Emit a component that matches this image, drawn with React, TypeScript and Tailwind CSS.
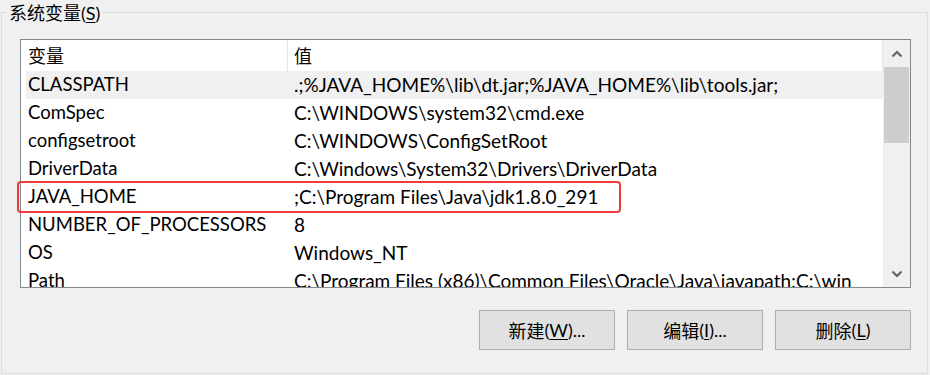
const rows = [
  { name: "CLASSPATH", value: ".;%JAVA_HOME%\\lib\\dt.jar;%JAVA_HOME%\\lib\\tools.jar;", selected: true },
  { name: "ComSpec", value: "C:\\WINDOWS\\system32\\cmd.exe" },
  { name: "configsetroot", value: "C:\\WINDOWS\\ConfigSetRoot" },
  { name: "DriverData", value: "C:\\Windows\\System32\\Drivers\\DriverData" },
  { name: "JAVA_HOME", value: ";C:\\Program Files\\Java\\jdk1.8.0_291" },
  { name: "NUMBER_OF_PROCESSORS", value: "8" },
  { name: "OS", value: "Windows_NT" },
  { name: "Path", value: "C:\\Program Files (x86)\\Common Files\\Oracle\\Java\\javapath;C:\\win" },
];

const Chevron = ({ down }: { down?: boolean }) => (
  <svg width="12" height="8" viewBox="0 0 12 8">
    <path
      d={down ? "M1.5 1.5 L6 6 L10.5 1.5" : "M1.5 6.5 L6 2 L10.5 6.5"}
      fill="none"
      stroke="#606060"
      strokeWidth="2"
    />
  </svg>
);

const Btn = ({ label, hot, tail }: { label: string; hot: string; tail: string }) => (
  <button className="w-[136px] h-[40px] bg-[#e1e1e1] border border-[#adadad] flex items-center justify-center text-[18px]">
    <span className="font-['Noto_Sans_CJK_SC',sans-serif]">{label}</span>
    <span>(</span>
    <span className="underline underline-offset-2">{hot}</span>
    <span>){tail}</span>
  </button>
);

export default function App() {
  return (
    <div className="relative w-[930px] h-[375px] overflow-hidden bg-[#f0f0f0] text-black text-[18.5px] font-['Lato','Noto_Sans_CJK_SC',sans-serif]">
      {/* group box */}
      <div className="relative mt-[12px] ml-[1px] w-[927px] h-[362px] border border-[#dcdcdc]">
        <div className="absolute left-[5px] top-[-13px] px-[2px] bg-[#f0f0f0] leading-[24px] text-[18px]">
          <span className="font-['Noto_Sans_CJK_SC',sans-serif]">系统变量</span>(<span className="underline underline-offset-2">S</span>)
        </div>

        {/* list view */}
        <div className="ml-[18px] mt-[26px] w-[891px] h-[249px] border border-[#828790] bg-white flex">
          <div className="w-[862px] overflow-hidden">
            <div className="h-[31px] flex">
              <div className="w-[267px] pl-[7px] flex items-center border-r border-[#e5e5e5] font-['Noto_Sans_CJK_SC',sans-serif] text-[18px]">
                变量
              </div>
              <div className="flex-1 pl-[6px] flex items-center border-r border-[#e5e5e5] font-['Noto_Sans_CJK_SC',sans-serif] text-[18px]">
                值
              </div>
            </div>
            <div className="pl-[5px]">
              {rows.map((r) => (
                <div
                  key={r.name}
                  className={`h-[28px] flex items-center whitespace-nowrap ${r.selected ? "bg-[#f0f0f0]" : ""}`}
                >
                  <div className="w-[261px] pl-[2px]">{r.name}</div>
                  <div className="pl-[7px] text-[19px]">{r.value}</div>
                </div>
              ))}
            </div>
          </div>

          {/* scrollbar */}
          <div className="flex-1 bg-[#f0f0f0] flex flex-col">
            <div className="h-[27px] flex items-center justify-center">
              <Chevron />
            </div>
            <div className="h-[76px] mx-[1px] bg-[#cdcdcd]" />
            <div className="flex-1" />
            <div className="h-[27px] flex items-center justify-center">
              <Chevron down />
            </div>
          </div>
        </div>

        {/* buttons */}
        <div className="mt-[22px] pr-[16px] flex justify-end gap-[12px]">
          <Btn label="新建" hot="W" tail="..." />
          <Btn label="编辑" hot="I" tail="..." />
          <Btn label="删除" hot="L" tail="" />
        </div>
      </div>

      {/* red highlight around JAVA_HOME */}
      <div className="absolute left-[17px] top-[181px] w-[604px] h-[32px] border-2 border-[#ee3b3b] rounded-[4px]" />
    </div>
  );
}
